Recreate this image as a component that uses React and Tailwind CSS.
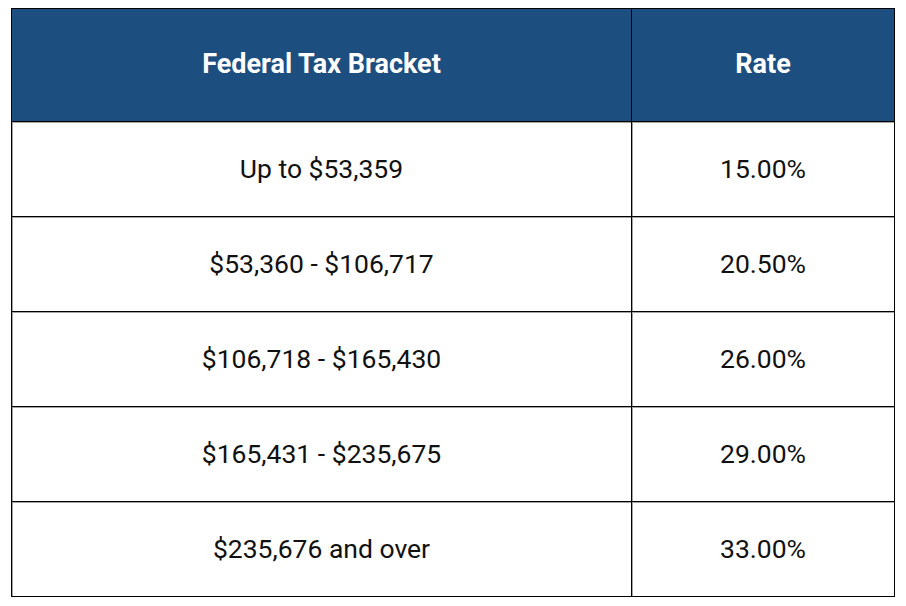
import React from 'react';

const brackets = [
  { range: 'Up to $53,359', rate: '15.00%' },
  { range: '$53,360 - $106,717', rate: '20.50%' },
  { range: '$106,718 - $165,430', rate: '26.00%' },
  { range: '$165,431 - $235,675', rate: '29.00%' },
  { range: '$235,676 and over', rate: '33.00%' },
];

const App = () => {
  return (
    <div className="min-h-screen bg-white pt-[8px] pl-[11px]" style={{ fontFamily: 'Roboto, "Liberation Sans", sans-serif' }}>
      <div className="w-[884px] border-l border-t border-black">
        {/* Header */}
        <div className="grid grid-cols-[620px_263px] bg-[#1d4e80] text-white font-bold text-[27px]">
          <div className="h-[113px] pb-[2px] flex items-center justify-center border-r border-b border-black">
            Federal Tax Bracket
          </div>
          <div className="h-[113px] pb-[2px] flex items-center justify-center border-r border-b border-black">
            Rate
          </div>
        </div>

        {brackets.map((row) => (
          <div key={row.range} className="grid grid-cols-[620px_263px] text-[26.5px] text-[#111]">
            <div className="h-[95px] flex items-center justify-center border-r border-b border-black shadow-[inset_1px_1px_0_#a3a3a3]">
              {row.range}
            </div>
            <div className="h-[95px] flex items-center justify-center border-r border-b border-black shadow-[inset_1px_1px_0_#a3a3a3]">
              {row.rate}
            </div>
          </div>
        ))}
      </div>
    </div>
  );
};

export default App;
